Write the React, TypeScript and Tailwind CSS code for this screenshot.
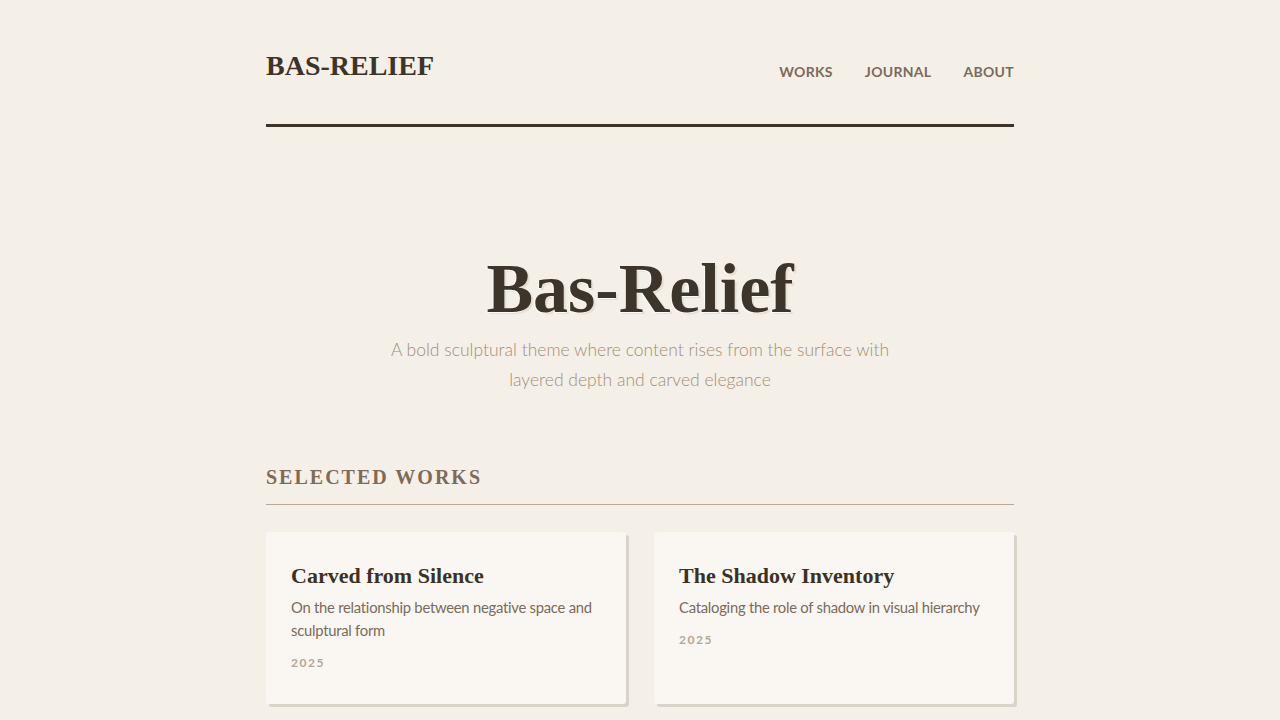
import React from 'react';

const works = [
  {
    title: 'Carved from Silence',
    text: 'On the relationship between negative space and sculptural form',
    year: '2025',
  },
  {
    title: 'The Shadow Inventory',
    text: 'Cataloging the role of shadow in visual hierarchy',
    year: '2025',
  },
];

const serif = "font-['Liberation_Serif','DejaVu_Serif',serif]";

export default function App() {
  return (
    <div className="min-h-screen bg-[#f4f0e8] font-['Lato','Noto_Sans',sans-serif]">
      <div className="mx-auto w-[748px]">
        {/* Header */}
        <header className="flex items-end justify-between border-b-[3px] border-[#3d3428] pt-[48px] pb-[40px]">
          <div className={`${serif} text-[28px] font-bold leading-[36px] text-[#3d3428]`}>
            BAS-RELIEF
          </div>
          <nav className="flex gap-8 pb-[2px] text-[14px] font-bold uppercase tracking-[0.3px] text-[#7a6a58]">
            <a href="#">Works</a>
            <a href="#">Journal</a>
            <a href="#">About</a>
          </nav>
        </header>

        {/* Hero */}
        <section className="flex flex-col items-center pt-[123px] text-center">
          <h1
            className={`${serif} text-[70px] font-bold leading-[77px] text-[#3d3529] [text-shadow:-1px_1px_0_#fdfbf7,2px_2px_1px_#e6dfd3]`}
          >
            Bas-Relief
          </h1>
          <p className="mt-[8px] max-w-[520px] text-[17.5px] font-light leading-[30px] text-[#a38e73]">
            A bold sculptural theme where content rises from the surface with layered depth and carved elegance
          </p>
        </section>

        {/* Works */}
        <section className="mt-[68px]">
          <h2
            className={`${serif} border-b border-[#b8aa94] pb-[13px] text-[20px] font-bold uppercase leading-[28px] tracking-[2px] text-[#7d6b57]`}
          >
            Selected Works
          </h2>
          <div className="mt-[27px] grid grid-cols-2 gap-7">
            {works.map((w) => (
              <article
                key={w.title}
                className="rounded-[3px] bg-[#faf7f2] px-[25px] py-8 shadow-[3px_3px_0_#d9d3c8]"
              >
                <h3 className={`${serif} text-[22px] font-bold leading-[24px] text-[#3b3226]`}>{w.title}</h3>
                <p className="mt-[8px] text-[14.8px] leading-[23px] tracking-[-0.25px] text-[#7a6b5b]">{w.text}</p>
                <div className="mt-3 text-[12px] font-bold leading-[18px] tracking-[1.5px] text-[#b5a795]">
                  {w.year}
                </div>
              </article>
            ))}
          </div>
        </section>
      </div>
    </div>
  );
}
